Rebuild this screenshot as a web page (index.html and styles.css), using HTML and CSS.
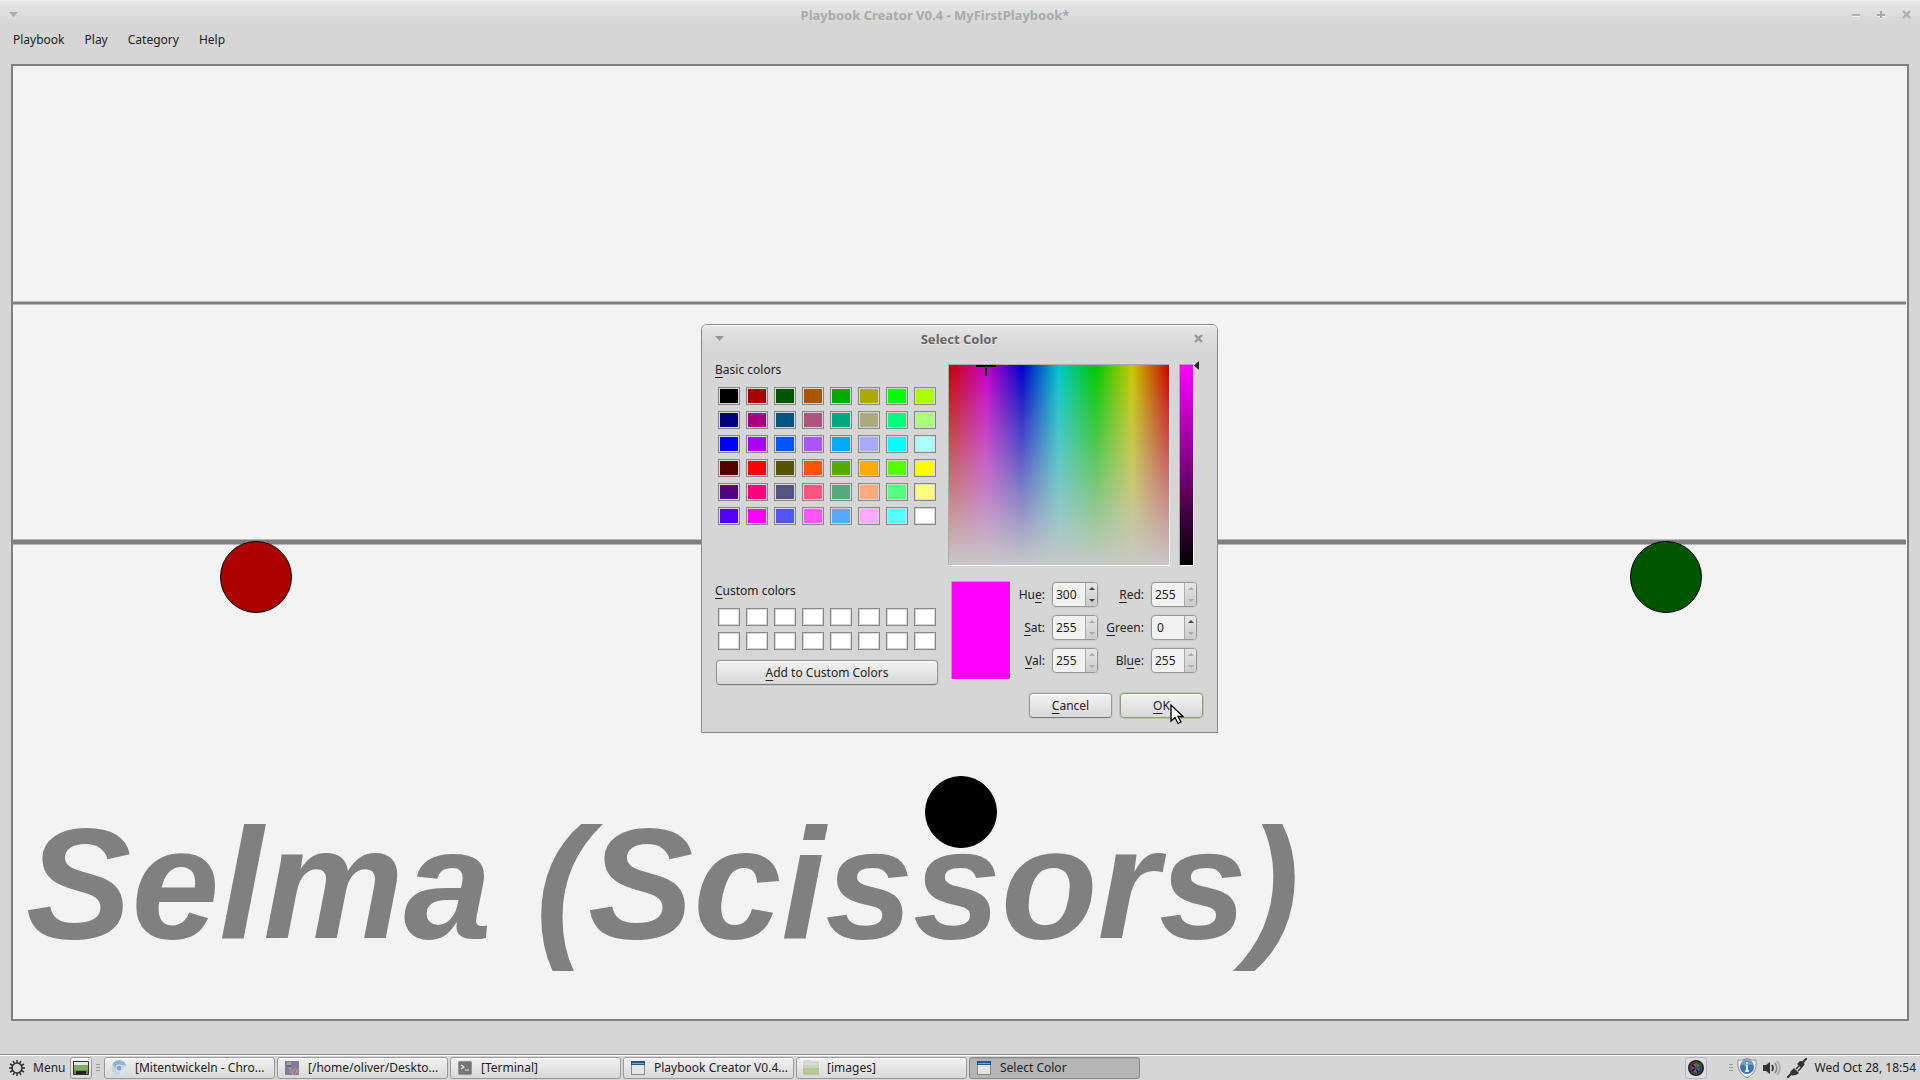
FILE: index.html
```html
<!DOCTYPE html>
<html lang="en">
<head>
<meta charset="utf-8">
<title>Playbook Creator</title>
<link rel="stylesheet" href="styles.css">
</head>
<body>
<main class="window">
  <header class="titlebar">
    <button class="plain" aria-label="Window menu"><svg width="9" height="5" viewBox="0 0 9 5"><path d="M0 0h9L4.500 5z" fill="#aaa"/></svg></button>
    <h1>Playbook Creator V0.4 - MyFirstPlaybook*</h1>
    <div class="controls">
      <button class="plain" aria-label="Minimize"><svg width="9" height="9"><path d="M0 5h8" stroke="#b0b0b0" stroke-width="2"/><path d="M0 6.500h8" stroke="#f4f4f4"/></svg></button>
      <button class="plain" aria-label="Maximize"><svg width="9" height="9"><path d="M0 5h8M4 1v7" stroke="#a6a6a6" stroke-width="2"/><path d="M0 6.500h3M5 6.500h3M3 8.500h2" stroke="#f4f4f4"/></svg></button>
      <button class="plain" aria-label="Close"><svg width="9" height="9"><path d="M1 1l7 7M8 1L1 8" stroke="#b0b0b0" stroke-width="2.400"/></svg></button>
    </div>
  </header>
  <nav class="menubar">
    <button class="plain">Playbook</button><button class="plain">Play</button><button class="plain">Category</button><button class="plain">Help</button>
  </nav>
  <section class="field">
    <div class="line far"></div>
    <div class="line scrimmage"></div>
    <p class="play-name">Selma (Scissors)</p>
    <div class="player red"></div>
    <div class="player black"></div>
    <div class="player green"></div>
  </section>

  <section class="dialog" role="dialog" aria-labelledby="dlg-title">
    <header class="dialog-title">
      <button class="plain" aria-label="Dialog menu"><svg width="9" height="6"><path d="M0 0h9L4.500 5z" fill="#999"/></svg></button>
      <h2 id="dlg-title">Select Color</h2>
      <button class="plain" aria-label="Close dialog"><svg width="9" height="9"><path d="M1 1l7 7M8 1L1 8" stroke="#999" stroke-width="2.400"/></svg></button>
    </header>
    <div class="dialog-body">
      <div class="palette">
        <h3><u>B</u>asic colors</h3>
        <div class="swatches" id="basic"></div>
        <h3 class="custom-label"><u>C</u>ustom colors</h3>
        <div class="swatches" id="custom"></div>
        <button class="btn add"><span><u>A</u>dd to Custom Colors</span></button>
      </div>
      <div class="mixer">
        <div class="pickers">
          <div class="spectrum"><svg class="cross" width="20" height="11"><path d="M0 1h20M10 0v11" stroke="#000" stroke-width="2"/></svg></div>
          <div class="value"></div>
          <svg class="pointer" width="5" height="9"><path d="M5 0v9L0 4.500z" fill="#222"/></svg>
        </div>
        <div class="values">
          <div class="preview"></div>
          <div class="fields">
            <label for="hue">Hu<u>e</u>:</label><div class="spin"><input id="hue" value="300"><span class="steps"><button class="step" aria-label="Hue up"></button><button class="step down" aria-label="Hue down"></button></span></div>
            <label for="red"><u>R</u>ed:</label><div class="spin"><input id="red" value="255"><span class="steps"><button class="step off" aria-label="Red up"></button><button class="step down off" aria-label="Red down"></button></span></div>
            <label for="sat"><u>S</u>at:</label><div class="spin"><input id="sat" value="255"><span class="steps"><button class="step off" aria-label="Sat up"></button><button class="step down off" aria-label="Sat down"></button></span></div>
            <label for="green"><u>G</u>reen:</label><div class="spin"><input id="green" class="zero" value="0"><span class="steps"><button class="step" aria-label="Green up"></button><button class="step down off" aria-label="Green down"></button></span></div>
            <label for="val"><u>V</u>al:</label><div class="spin"><input id="val" value="255"><span class="steps"><button class="step off" aria-label="Val up"></button><button class="step down off" aria-label="Val down"></button></span></div>
            <label for="blue">Bl<u>u</u>e:</label><div class="spin"><input id="blue" value="255"><span class="steps"><button class="step off" aria-label="Blue up"></button><button class="step down off" aria-label="Blue down"></button></span></div>
          </div>
        </div>
        <div class="actions">
          <button class="btn"><span><u>C</u>ancel</span></button>
          <button class="btn ok"><span><u>O</u>K</span>
            <svg class="cursor" width="14" height="21" viewBox="0 0 14 21"><path d="M1 1v16l4-3.500 3 6 3-1.500-3-5.500h5z" fill="#fff" stroke="#000" stroke-width="1.300"/></svg></button>
        </div>
      </div>
    </div>
  </section>
</main>

<footer class="taskbar">
  <button class="plain menu">
    <svg width="16" height="16" viewBox="0 0 16 16"><circle cx="8" cy="8" r="5" fill="none" stroke="#333" stroke-width="1.600"/><path d="M8 0v3M8 13v3M0 8h3M13 8h3M4 1l1.500 2.700M12 1l-1.500 2.700M1 4l2.700 1.500M15 4l-2.700 1.500M1 12l2.700-1.500M15 12l-2.700-1.500M4 15l1.500-2.700M12 15l-1.500-2.700" stroke="#333" stroke-width="1.500"/></svg>
    <span>Menu</span></button>
  <button class="task desktop" aria-label="Show desktop"><svg width="16" height="16" viewBox="0 0 16 16"><rect y="1" width="16" height="14" rx="1" fill="#333"/><path d="M1 2h14v3H1z" fill="#e4e4e4"/><path d="M1 5h14v9H1z" fill="#629141"/><path d="M1 5h14v5H1z" fill="#82ac60"/><path d="M3 11h10v3H3z" fill="#222"/></svg></button>
  <span class="grip"></span>
  <div class="tasks">
    <button class="task"><svg width="16" height="16" viewBox="0 0 16 16"><circle cx="8" cy="8" r="7.500" fill="#c3d5e5"/><path d="M1.500 4A7.500 7.500 0 0 1 15 5H8L5 9z" fill="#95b2ca"/><path d="M15.300 6A7.500 7.500 0 0 1 8 15.500L11 9z" fill="#d9e6f1"/><circle cx="8" cy="8" r="3.500" fill="#e2edf7"/><circle cx="8" cy="8" r="2.600" fill="#83a7cd"/></svg><span>[Mitentwickeln - Chro...</span></button>
    <button class="task"><svg width="16" height="16" viewBox="0 0 16 16"><rect x="1" y="1" width="14" height="14" fill="#817a9e"/><path d="M3 2h4v4H3z" fill="#a5a98f"/><path d="M3 5h4v2H3z" fill="#696890"/><path d="M4 8h4M6 8v5M8 10h3M8 10v4h2M8 12h2M11 8l4 6M15 8l-4 6" stroke="#c29a83" fill="none"/></svg><span>[/home/oliver/Deskto...</span></button>
    <button class="task"><svg width="16" height="16" viewBox="0 0 16 16"><rect x="1.500" y="1.500" width="13" height="13" rx="1" fill="#747678" stroke="#939393"/><path d="M4 5l3 2-3 2M8 10h4" fill="none" stroke="#e8e8e8" stroke-width="1.200"/></svg><span>[Terminal]</span></button>
    <button class="task"><svg width="16" height="16" viewBox="0 0 16 16"><rect x="1.500" y="2.500" width="13" height="12" fill="#e5e6df" stroke="#888"/><path d="M1 1h14v4H1z" fill="#24548e"/><path d="M2 3h12v1H2z" fill="#76a7da"/></svg><span>Playbook Creator V0.4...</span></button>
    <button class="task"><svg width="16" height="16" viewBox="0 0 16 16"><path d="M1 1h6l1 1h7v5H1z" fill="#ddd" stroke="#c4c4c4"/><path d="M0 5h16v10H0z" fill="#b5c79d"/><path d="M0 5h16v3H0z" fill="#c9d7b7"/></svg><span>[images]</span></button>
    <button class="task active"><svg width="16" height="16" viewBox="0 0 16 16"><rect x="1.500" y="2.500" width="13" height="12" fill="#e5e6df" stroke="#888"/><path d="M1 1h14v4H1z" fill="#24548e"/><path d="M2 3h12v1H2z" fill="#76a7da"/></svg><span>Select Color</span></button>
  </div>
  <div class="tray">
    <svg class="camera" width="22" height="22" viewBox="0 0 22 22"><rect x=".5" y=".5" width="21" height="21" rx="3" fill="#dcdce2" stroke="#b7b7bd"/><circle cx="11" cy="11" r="8" fill="#222"/><circle cx="11" cy="11" r="6.500" fill="#444"/><circle cx="11" cy="11" r="5" fill="#171717"/><path d="M11 11L8 7l4-1z" fill="#c04c2c"/><path d="M11 11l1-5 4 3z" fill="#2f8a4a"/><path d="M11 11l5-1-2 5z" fill="#2f68ad"/><path d="M11 11l1 5-4-1z" fill="#9c4092"/><path d="M11 11l-5 2 0-4z" fill="#5a42a0"/></svg>
    <span class="grip"></span>
    <svg class="shield" width="20" height="22" viewBox="0 0 20 22"><path d="M10 1c2 2 6 2.500 9 2 1 9-2 14-9 18C3 17 0 12 1 3c3 .5 7 0 9-2z" fill="#eee" stroke="#8d8d8d"/><circle cx="10" cy="10" r="7" fill="#3e75b4"/><path d="M4 8a6 6 0 0 1 12 0z" fill="#6e9bcf"/><path d="M10 5v2M8.500 8.500H10V14M8 14h4" fill="none" stroke="#fff" stroke-width="1.600"/></svg>
    <svg class="speaker" width="19" height="16" viewBox="0 0 19 16"><path d="M0 5h3l4-3v12l-4-3H0z" fill="#333"/><path d="M9 5q2 3 0 6" fill="none" stroke="#333" stroke-width="1.800"/><path d="M12 3q3.500 5 0 10" fill="none" stroke="#888" stroke-width="1.700"/><path d="M14 1q6 7 0 14" fill="none" stroke="#aaa" stroke-width="1.700"/></svg>
    <svg class="plug" width="20" height="20" viewBox="0 0 20 20"><path d="M0 20l5-5M15 5l5-5" stroke="#333" stroke-width="2"/><path d="M3 14l4-4 5 5-3 2-4 .500zM10 6l3-3 4 .500.500 3-3 4z" fill="#333"/><path d="M9 11l3-3M11 13l3-3" stroke="#333" stroke-width="1.500"/></svg>
    <time>Wed Oct 28, 18:54</time>
  </div>
</footer>
<script src="palette.js"></script>
</body>
</html>
```

FILE: styles.css
```css
* { box-sizing: border-box; }
body {
  margin: 0;
  min-height: 100vh;
  display: flex;
  flex-direction: column;
  background: #d6d6d6;
  color: #222;
  font: 12px/16px "Noto Sans", sans-serif;
}
button, input { font: inherit; color: inherit; }
h1, h2, h3, p { margin: 0; font: inherit; }
svg { display: block; flex: none; }
u { text-underline-offset: 3px; text-decoration-thickness: 1px; }
.plain { padding: 0; border: 0; background: none; }

.window { position: relative; flex: 1; display: flex; flex-direction: column; padding-bottom: 33px; }
.titlebar {
  display: flex;
  align-items: center;
  height: 26px;
  padding: 2px 9px 0;
  border-top: 1px solid #f4f4f4;
  background: linear-gradient(#e7e7e7, #d6d6d6 22px);
}
.titlebar h1 { flex: 1; text-align: center; font-weight: 700; font-size: 13px; color: #aaa; }
.controls { display: flex; gap: 16px; }
.menubar { display: flex; gap: 20px; padding: 6px 13px 0; height: 38px; align-items: flex-start; }
.field {
  position: relative;
  flex: 1;
  margin: 0 11px;
  border: 2px solid #808080;
  background: #f3f3f3;
  overflow: hidden;
}
.line { position: absolute; left: 0; right: 1px; background: #808080; border: solid #b9b9b9; border-width: 1px 0; }
.far { top: 24.650%; height: 4px; }
.scrimmage { top: 49.650%; height: 6px; }
.player { position: absolute; width: 72px; height: 72px; margin-left: -35px; border: 1px solid #000; border-radius: 50%; }
.red { left: 12.800%; top: 49.850%; background: #a00; }
.green { left: 87.200%; top: 49.850%; background: #050; }
.black { left: 50%; top: 74.550%; background: #000; }
.play-name {
  position: absolute;
  left: 13px;
  bottom: 44px;
  color: #808080;
  font: italic 700 158px/184px "Liberation Sans", sans-serif;
  white-space: nowrap;
}

.dialog {
  position: absolute;
  left: 50%;
  top: 50%;
  width: 517px;
  transform: translate(-259px, -203px);
  border: 1px solid #888;
  border-radius: 6px 6px 0 0;
  background: #d6d6d6;
}
.dialog-title {
  display: flex;
  align-items: center;
  height: 26px;
  padding: 0 14px 0 13px;
  border-top: 1px solid #fff;
  border-radius: 5px 5px 0 0;
  background: linear-gradient(#e7e7e7, #d6d6d6 22px);
}
.dialog-title h2 { flex: 1; text-align: center; font-weight: 700; font-size: 13px; color: #666; text-shadow: 0 1px #eee; }
.dialog-body { display: flex; gap: 9px; padding: 10px 13px 14px; }
.palette { width: 224px; padding-top: 1px; }
.swatches { display: grid; grid-template-columns: repeat(8, 22px); gap: 6px; padding: 9px 3px 0; }
.swatch { display: flex; width: 22px; height: 18px; padding: 1px; border: 1px solid #888; background: #d6d6d6; }
.swatch i { flex: 1; align-self: stretch; }
.custom-label { margin-top: 58px; }
.btn {
  position: relative;
  height: 25px;
  padding: 0;
  border: 1px solid #999;
  border-bottom-color: #777;
  border-radius: 4px;
  background: linear-gradient(#f3f3f3, #d8d8d8);
  box-shadow: 0 0 0 1px #ccc, inset 0 1px #fff;
}
.add { display: block; width: 222px; margin: 10px 0 0 1px; }
.mixer { flex: 1; padding-top: 3px; }
.pickers { display: flex; }
.spectrum {
  position: relative;
  width: 222px;
  height: 202px;
  margin-right: 9px;
  border: 1px solid #aaa;
  border-right-color: #fff;
  border-bottom-color: #fff;
  background:
    linear-gradient(rgba(200, 200, 200, 0), #c8c8c8),
    linear-gradient(to right, #c80000, #c800c8, #0000c8, #00c8c8, #00c800, #c8c800, #c80000);
}
.cross { position: absolute; left: 27px; top: 0; }
.value { width: 15px; border: 1px solid #aaa; border-right-color: #fff; border-bottom-color: #fff; background: linear-gradient(#f0f, #000); }
.pointer { margin-top: -3px; }
.values { display: flex; gap: 10px; padding: 15px 0 0 3px; }
.preview { width: 60px; height: 99px; border: 1px solid #aaa; border-right-color: #fff; border-bottom-color: #fff; background: #f0f; }
.fields {
  display: grid;
  grid-template-columns: 24px 46px 39px 46px;
  column-gap: 7px;
  row-gap: 8px;
  padding-top: 1px;
  align-content: start;
  align-items: center;
}
.fields label { justify-self: end; white-space: nowrap; }
.spin { display: flex; height: 25px; border: 1px solid #999; border-radius: 4px; background: #f2f2f2; box-shadow: 0 0 0 1px #ccc; overflow: hidden; }
.spin input { width: 32px; padding: 0 0 0 3px; border: 0; background: none; }
.spin .zero { padding-left: 5px; }
.steps { flex: 1; display: flex; flex-direction: column; border-left: 1px solid #aaa; background: linear-gradient(#e6e6e6, #ccc); }
.step { flex: 1; display: flex; align-items: center; justify-content: center; padding: 0; border: 0; background: none; }
.step::before { content: ""; border: 3px solid transparent; border-top: 0; border-bottom: 3px solid #444; }
.step.down::before { border-bottom: 0; border-top: 3px solid #444; }
.step.off::before { border-top-color: #aaa; border-bottom-color: #aaa; }
.actions { display: flex; gap: 8px; justify-content: flex-end; padding: 13px 1px 0 0; }
.actions .btn { width: 83px; }
.btn.ok { border-color: #8f9a80; box-shadow: 0 0 0 1px #b8c8a0, inset 0 1px #fff; }
.cursor { position: absolute; left: 49px; top: 10px; }

.taskbar {
  display: flex;
  align-items: center;
  height: 26px;
  padding: 2px 4px 1px 9px;
  border-top: 1px solid #888;
  box-shadow: inset 0 1px #fff;
}
.menu { display: flex; align-items: center; gap: 8px; width: 61px; }
.grip { width: 4px; height: 8px; margin: 0 4px; background: repeating-linear-gradient(#999 0 1px, transparent 1px 3px); }
.tasks { flex: 1; display: flex; gap: 2px; }
.task {
  display: flex;
  align-items: center;
  gap: 8px;
  width: 171px;
  height: 22px;
  padding: 0 6px;
  border: 1px solid #999;
  border-radius: 3px;
  background: linear-gradient(#f2f2f2, #d8d8d8);
  box-shadow: inset 0 1px #fff;
  white-space: nowrap;
}
.task.active { background: #b5b5b5; border-color: #888; box-shadow: inset 0 1px #a5a5a5; }
.task.desktop { width: 22px; padding: 0 2px; }
.tray { display: flex; align-items: center; }
.camera { margin-right: 18px; }
.shield { margin-right: 6px; }
.speaker { margin-right: 5px; }
.plug { margin-right: 7px; }
```

FILE: palette.js
```js
const basic = [
  "#000000 #aa0000 #005500 #aa5500 #00aa00 #aaaa00 #00ff00 #aaff00",
  "#00007f #aa007f #00557f #aa557f #00aa7f #aaaa7f #00ff7f #aaff7f",
  "#0000ff #aa00ff #0055ff #aa55ff #00aaff #aaaaff #00ffff #aaffff",
  "#550000 #ff0000 #555500 #ff5500 #55aa00 #ffaa00 #55ff00 #ffff00",
  "#55007f #ff007f #55557f #ff557f #55aa7f #ffaa7f #55ff7f #ffff7f",
  "#5500ff #ff00ff #5555ff #ff55ff #55aaff #ffaaff #55ffff #ffffff"
].join(" ").split(" ");

function fill(id, colors) {
  const box = document.getElementById(id);
  for (const color of colors) {
    const swatch = document.createElement("button");
    swatch.className = "swatch";
    swatch.setAttribute("aria-label", color);
    const chip = document.createElement("i");
    chip.style.background = color;
    swatch.append(chip);
    box.append(swatch);
  }
}

fill("basic", basic);
fill("custom", Array(16).fill("#ffffff"));
```
